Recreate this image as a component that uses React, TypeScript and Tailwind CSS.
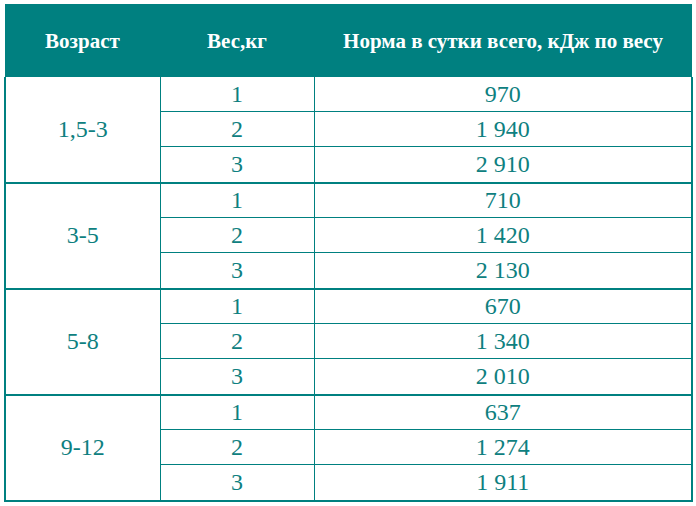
import React from "react";

const groups = [
  { age: "1,5-3", vals: ["970", "1 940", "2 910"] },
  { age: "3-5", vals: ["710", "1 420", "2 130"] },
  { age: "5-8", vals: ["670", "1 340", "2 010"] },
  { age: "9-12", vals: ["637", "1 274", "1 911"] },
];

const rowH = ["h-[34px]", "h-[35px]", "h-[37px]"];

export default function App() {
  return (
    <div className="bg-white w-[696px] h-[506px] pt-[4px] pl-[4px] font-['Liberation_Serif','Times_New_Roman',serif]">
      <table className="border-collapse w-[687px] table-fixed font-['Liberation_Serif','Times_New_Roman',serif]">
        <colgroup>
          <col className="w-[155px]" />
          <col className="w-[154px]" />
          <col className="w-[378px]" />
        </colgroup>
        <thead>
          <tr className="bg-[#008080] text-white text-[21px] h-[73px]">
            <th className="font-bold pt-[2px]">Возраст</th>
            <th className="font-bold pt-[2px]">Вес,кг</th>
            <th className="font-bold pt-[2px]">Норма в сутки всего, кДж по весу</th>
          </tr>
        </thead>
        <tbody className="text-[#0e8080] text-[24px]">
          {groups.map((g, gi) => (
            <React.Fragment key={gi}>
              {g.vals.map((v, i) => (
                <tr key={i} className={rowH[i]}>
                  {i === 0 && (
                    <td rowSpan={3} className="text-center border-l-2 border-r border-b-2 border-[#008080] pb-[2px]">
                      {g.age}
                    </td>
                  )}
                  <td className={`text-center border-r border-[#008080] leading-none ${i === 2 ? "border-b-2" : "border-b"}`}>{i + 1}</td>
                  <td className={`text-center border-r-2 border-[#008080] leading-none ${i === 2 ? "border-b-2" : "border-b"}`}>{v}</td>
                </tr>
              ))}
            </React.Fragment>
          ))}
        </tbody>
      </table>
    </div>
  );
}
